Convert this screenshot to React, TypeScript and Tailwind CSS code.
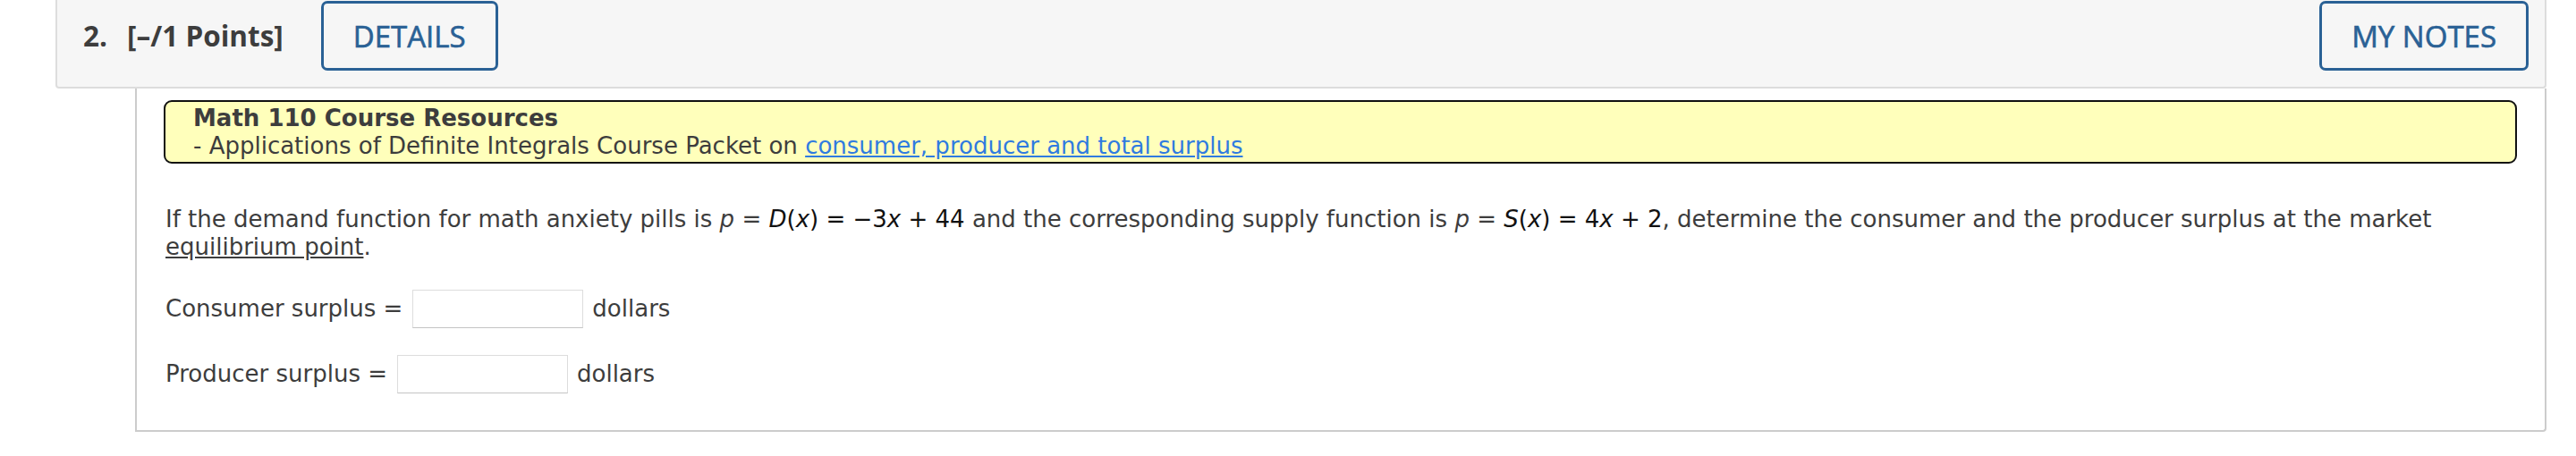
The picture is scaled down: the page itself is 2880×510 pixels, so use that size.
export default function App() {
    const verdana = { fontFamily: '"DejaVu Sans", Verdana, sans-serif' };

    return (
        <div className="w-[2880px] h-[510px] bg-white overflow-hidden">
            <div className="pl-[62px] pr-[33px]">
                {/* Question header */}
                <div
                    className="h-[99px] flex items-start pt-[1px] pl-[29px] pr-[18px] bg-[#f6f6f6] border-2 border-t-0 border-[#dddddd] rounded-b-[4px]"
                    style={{ fontFamily: '"Open Sans", sans-serif' }}
                >
                    <div className="h-[78px] flex items-center text-[31.5px] font-bold text-[#3d3d3d]">
                        <span>2.</span>
                        <span className="ml-[22px]">[–/1 Points]</span>
                    </div>
                    <button className="ml-[42px] h-[78px] px-[33px] border-[3px] border-[#2a6195] rounded-[7px] text-[33px] text-[#2a6195] leading-none [-webkit-text-stroke:0.6px_#2a6195]">
                        DETAILS
                    </button>
                    <button className="ml-auto h-[78px] px-[33px] border-[3px] border-[#2a6195] rounded-[7px] text-[33px] text-[#2a6195] leading-none [-webkit-text-stroke:0.6px_#2a6195]">
                        MY NOTES
                    </button>
                </div>

                {/* Question body */}
                <div
                    className="ml-[89px] pt-[13px] pb-[41px] pl-[32px] pr-[31px] border-x-2 border-b-2 border-[#cccccc] rounded-br-[4px] text-[26px] text-[#3d3d3d]"
                    style={verdana}
                >
                    <div className="-ml-[2px] pl-[31px] pt-[3px] pb-[2px] border-2 border-[#111111] rounded-[9px] bg-[#ffffbb] leading-[31px]">
                        <div className="font-bold">Math 110 Course Resources</div>
                        <div>
                            - Applications of Definite Integrals Course Packet on{" "}
                            <a href="#" className="text-[#2f7be0] underline">
                                consumer, producer and total surplus
                            </a>
                        </div>
                    </div>

                    <p className="mt-[47px] leading-[31px]">
                        If the demand function for math anxiety pills is <i>p</i> ={" "}
                        <span className="text-[#111]">
                            <i>D</i>(<i>x</i>) = −3<i>x</i> + 44
                        </span>{" "}
                        and the corresponding supply function is <i>p</i> ={" "}
                        <span className="text-[#111]">
                            <i>S</i>(<i>x</i>) = 4<i>x</i> + 2
                        </span>
                        , determine the consumer and the producer surplus at the market{" "}
                        <span className="underline">equilibrium point</span>.
                    </p>

                    <div className="mt-[32px] flex items-center">
                        <span>Consumer surplus =</span>
                        <input
                            type="text"
                            className="ml-[11px] w-[191px] h-[43px] border border-[#dddddd] border-b-[#c4c4c4] bg-white"
                        />
                        <span className="ml-[10px]">dollars</span>
                    </div>

                    <div className="mt-[30px] flex items-center">
                        <span>Producer surplus =</span>
                        <input
                            type="text"
                            className="ml-[11px] w-[191px] h-[43px] border border-[#dddddd] border-b-[#c4c4c4] bg-white"
                        />
                        <span className="ml-[10px]">dollars</span>
                    </div>
                </div>
            </div>
        </div>
    );
}
